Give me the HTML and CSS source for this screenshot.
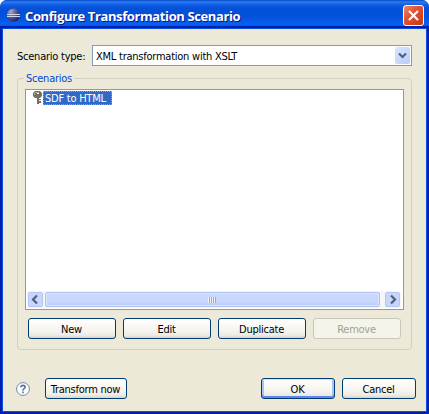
FILE: index.html
```html
<!DOCTYPE html>
<html lang="en">
<head>
<meta charset="utf-8">
<title>Configure Transformation Scenario</title>
<link rel="stylesheet" href="styles.css">
</head>
<body>
<div class="window">
  <header class="titlebar">
    <svg class="logo" width="15" height="15" viewBox="0 0 15 15">
      <defs><radialGradient id="orb" cx=".3" cy=".25" r=".8"><stop offset="0" stop-color="#b9a5b8"/><stop offset=".45" stop-color="#665f99"/><stop offset="1" stop-color="#202063"/></radialGradient></defs>
      <circle cx="7.5" cy="7" r="6.6" fill="url(#orb)"/>
      <path d="M1 6.5h13M1 8.5h13" stroke="#c9d6ee" stroke-width="1"/>
    </svg>
    <h1 class="title">Configure Transformation Scenario</h1>
    <button class="close" aria-label="Close"><svg width="19" height="19" viewBox="0 0 19 19"><path d="M5 5l9 9M14 5l-9 9" stroke="#fff" stroke-width="2.2"/></svg></button>
  </header>
  <main class="body">
    <div class="type-row">
      <label class="type-label">Scenario type:</label>
      <div class="combo"><span class="combo-text">XML transformation with XSLT</span>
        <span class="combo-arrow"><svg width="15" height="17" viewBox="0 0 15 17"><path d="M4 6.5l3.5 3.5L11 6.5" fill="none" stroke="#4d6185" stroke-width="2.2"/></svg></span>
      </div>
    </div>
    <section class="group">
      <span class="legend">Scenarios</span>
      <div class="list">
        <div class="item">
          <svg class="key" width="10" height="13" viewBox="0 0 10 13">
            <path d="M2 0h5l2 2v3L7 7H6v6H4V7H2L0 5V2z" fill="#77705f"/>
            <path d="M2 1h4v1H2zM1 2h1v2H1z" fill="#aaa594"/>
            <path d="M4 2h2v1H4z" fill="#fff"/>
            <path d="M6 8h2v1H6zM6 10h2v2H6z" fill="#77705f"/>
          </svg>
          <span class="selected">SDF to HTML</span>
        </div>
        <div class="scrollbar">
          <span class="sb-btn"><svg width="13" height="13" viewBox="0 0 13 13"><path d="M8 2.5l-4 4 4 4" fill="none" stroke="#4d6185" stroke-width="2.2"/></svg></span>
          <span class="thumb"><i class="grip"></i></span>
          <span class="sb-btn"><svg width="13" height="13" viewBox="0 0 13 13"><path d="M5 2.5l4 4-4 4" fill="none" stroke="#4d6185" stroke-width="2.2"/></svg></span>
        </div>
      </div>
      <div class="actions">
        <button class="btn">New</button>
        <button class="btn">Edit</button>
        <button class="btn">Duplicate</button>
        <button class="btn disabled" disabled>Remove</button>
      </div>
    </section>
    <footer class="footer">
      <svg class="help" width="14" height="14" viewBox="0 0 14 14"><circle cx="7" cy="7" r="6.4" fill="#fff" stroke="#7189a8"/><path d="M4.8 5.2V4.6Q5.2 3.4 7 3.4T9.2 5Q9.2 6 8 6.6T7 8.6M7 9.6v1.6" fill="none" stroke="#52709c" stroke-width="1.6"/></svg>
      <button class="btn transform">Transform now</button>
      <button class="btn ok">OK</button>
      <button class="btn cancel">Cancel</button>
    </footer>
  </main>
</div>
</body>
</html>
```
FILE: styles.css
```css
* { box-sizing: border-box; }
body { margin: 0; background: #fff; overflow: hidden; }
.window {
  width: 429px; height: 414px;
  display: flex; flex-direction: column;
  border-radius: 7px 7px 0 0; overflow: hidden;
  background: #0a3bd8;
  font: 11px/13px "DejaVu Sans Condensed", "DejaVu Sans", sans-serif;
  letter-spacing: -.24px;
  color: #000;
}
.titlebar {
  height: 29px; flex: none;
  display: flex; align-items: flex-start;
  padding: 5px 5px 0 6px;
  background: linear-gradient(#0a48c8 0, #2b7cf0 2px, #0b5ce4 5px, #0450d6 9px, #0352dc 17px, #0560f2 24px, #055aea 26px, #0040bd 29px);
}
.logo { margin-top: 3px; }
.title {
  flex: 1; margin: 3px 0 0 4px;
  font: bold 13px/16px "Open Sans", sans-serif;
  letter-spacing: -.39px; white-space: nowrap;
  color: #fff; text-shadow: 1px 1px 0 #0a1883;
}
.close {
  width: 21px; height: 21px; padding: 0;
  border: 1px solid #fff; border-radius: 3px;
  background: linear-gradient(135deg, #eb8a6d, #e15232 40%, #c43913);
}
.close svg { display: block; }
.body {
  flex: 1; margin: 0 3px 3px;
  padding: 16px 11px 0 14px;
  background: #ece9d8;
  box-shadow: 0 0 0 1px #0b4be6, 0 0 0 3px #0020a8;
}
.type-row { display: flex; height: 21px; align-items: center; }
.type-label { width: 75px; padding-top: 1px; white-space: nowrap; }
.combo {
  width: 320px; height: 21px; padding: 0 1px 0 3px;
  display: flex; align-items: center; justify-content: space-between;
  border: 1px solid #7f9db9; background: #fff;
}
.combo-text { padding-top: 1px; white-space: nowrap; }
.combo-arrow {
  width: 15px; height: 17px; border-radius: 2px;
  background: linear-gradient(135deg, #dbe6ff, #b7ccf7);
}
.combo-arrow svg { display: block; }
.group {
  position: relative;
  width: 395px; height: 272px; margin-top: 12px;
  padding: 10px 7px 0;
  border: 1px solid #d0d0bf; border-radius: 4px;
}
.legend {
  position: absolute; left: 6px; top: -7px; padding: 0 2px;
  background: #ece9d8; color: #0046d5;
}
.list {
  height: 221px; padding: 1px 2px 1px 7px;
  display: flex; flex-direction: column; justify-content: space-between;
  border: 1px solid #7f9db9; background: #fff;
}
.item { display: flex; height: 14px; }
.selected {
  width: 69px; height: 14px; padding-left: 1px;
  line-height: 13px; white-space: nowrap;
  border: 1px dotted #d79a3a; background: #316ac5; color: #fff;
}
.scrollbar {
  height: 17px; margin-left: -6px; padding: 1px;
  display: flex; background: #f5f6f8;
}
.sb-btn {
  width: 15px; height: 15px; flex: none;
  border: 1px solid #b3c7f5; border-radius: 2px; background: #c8d6fb;
}
.sb-btn svg { display: block; }
.thumb {
  flex: 1; margin: 0 5px 0 2px;
  display: flex; align-items: center; justify-content: center;
  border: 1px solid #adc1ec; border-radius: 2px;
  background: linear-gradient(#cad8fc, #c7d6fc 70%, #b6cbf8);
  box-shadow: inset 0 0 0 1px #dce6ff;
}
.grip {
  width: 8px; height: 6px; margin-right: 2px;
  background: repeating-linear-gradient(90deg, #eef4fe 0 1px, #8caae8 1px 2px);
}
.actions { display: flex; gap: 7px; padding: 8px 0 0 3px; }
.btn {
  width: 88px; height: 21px; padding: 1px 1px 0 0; flex: none;
  border: 1px solid #003c74; border-radius: 3px;
  background: linear-gradient(#fff, #f5f4ee 60%, #ecebe5 85%, #d9d3c8);
  font: inherit; letter-spacing: inherit; color: #000; white-space: nowrap;
}
.disabled { border-color: #c9c7ba; background: #f5f4ea; color: #a1a192; }
.footer { display: flex; align-items: center; margin: 28px 0 0 -1px; }
.help { flex: none; }
.transform { width: 82px; margin-left: 15px; }
.ok {
  width: 74px; margin-left: 134px;
  box-shadow: inset 0 1px #cee7ff, inset 0 -2px #6982ee, inset 2px 0 #a9c4f3, inset -2px 0 #a9c4f3;
}
.cancel { width: 74px; margin-left: 7px; }
```
